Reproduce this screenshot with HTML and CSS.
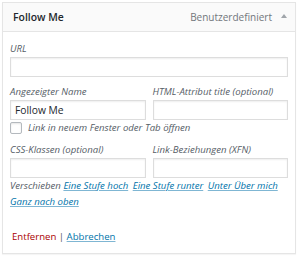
FILE: index.html
```html
<!DOCTYPE html>
<html lang="de">
<head>
<meta charset="utf-8">
<link rel="stylesheet" href="styles.css">
</head>
<body>
<div class="item">
  <div class="head">
    <span class="title">Follow Me</span>
    <span class="type">Benutzerdefiniert <span class="arrow"></span></span>
  </div>
  <div class="settings">
    <label class="field wide">
      <span class="lbl">URL</span>
      <span class="input"></span>
    </label>
    <div class="pair">
      <label class="field">
        <span class="lbl">Angezeigter Name</span>
        <span class="input">Follow Me</span>
      </label>
      <label class="field">
        <span class="lbl">HTML-Attribut title (optional)</span>
        <span class="input"></span>
      </label>
    </div>
    <label class="check"><span class="box"></span><span class="lbl">Link in neuem Fenster oder Tab öffnen</span></label>
    <div class="pair">
      <label class="field">
        <span class="lbl">CSS-Klassen (optional)</span>
        <span class="input"></span>
      </label>
      <label class="field">
        <span class="lbl">Link-Beziehungen (XFN)</span>
        <span class="input"></span>
      </label>
    </div>
    <p class="move"><span class="lbl">Verschieben</span> <a>Eine Stufe hoch</a> <a>Eine Stufe runter</a> <a>Unter Über mich</a> <a>Ganz nach oben</a></p>
    <p class="actions"><a class="del">Entfernen</a> <span class="sep">|</span> <a class="cancel">Abbrechen</a></p>
  </div>
</div>
</body>
</html>
```
FILE: styles.css
```css
html, body { margin: 0; padding: 0; background: #fff; }
body { font-family: "Open Sans", "Noto Sans", sans-serif; color: #23282d; padding: 2px; width: 294px; }
.item { border: 1px solid #e5e5e5; box-shadow: 0 1px 1px rgba(0,0,0,.04); background: #fff; height: 250px; }
.head { height: 28px; background: #fafafa; border-bottom: 1px solid #e5e5e5; display: flex; align-items: center; justify-content: space-between; padding: 0 8px 0 10px; }
.title { font-weight: 600; font-size: 10.4px; color: #23282d; }
.type { font-size: 10px; color: #72777c; display: flex; align-items: center; gap: 9px; }
.arrow { width: 0; height: 0; border-left: 3px solid transparent; border-right: 3px solid transparent; border-bottom: 4px solid #a0a5aa; margin-top: -2px; }
.settings { padding: 10px 7px 0 7px; }
.field { display: flex; flex-direction: column; }
.lbl { font-style: italic; font-size: 9.6px; color: #555d66; line-height: 14px; }
.field .lbl { margin-bottom: 1px; }
.input { display: block; height: 18px; border: 1px solid #ddd; box-shadow: inset 0 1px 2px rgba(0,0,0,.07); font-size: 10.3px; line-height: 18px; padding: 0 4px; color: #23282d; }
.wide { margin-bottom: 8px; }
.pair { display: grid; grid-template-columns: 1fr 1fr; gap: 7px; }
.check { display: flex; align-items: center; gap: 6px; margin: 2px 0 9px; height: 12px; }
.box { width: 10px; height: 10px; border: 1px solid #b4b9be; border-radius: 2px; box-shadow: inset 0 1px 2px rgba(0,0,0,.1); }
.move { margin: 0; font-size: 9.6px; line-height: 16px; }
.move .lbl { line-height: 16px; }
.move a { font-style: italic; color: #0073aa; text-decoration: underline; text-decoration-color: #7fb6d3; margin-right: 2px; }
.actions { margin: 19px 0 0; font-size: 9.6px; line-height: 16px; padding-left: 2px; }
.del { color: #a00; }
.sep { color: #555; }
.cancel { color: #0073aa; text-decoration: underline; text-decoration-color: #7fb6d3; }
```
